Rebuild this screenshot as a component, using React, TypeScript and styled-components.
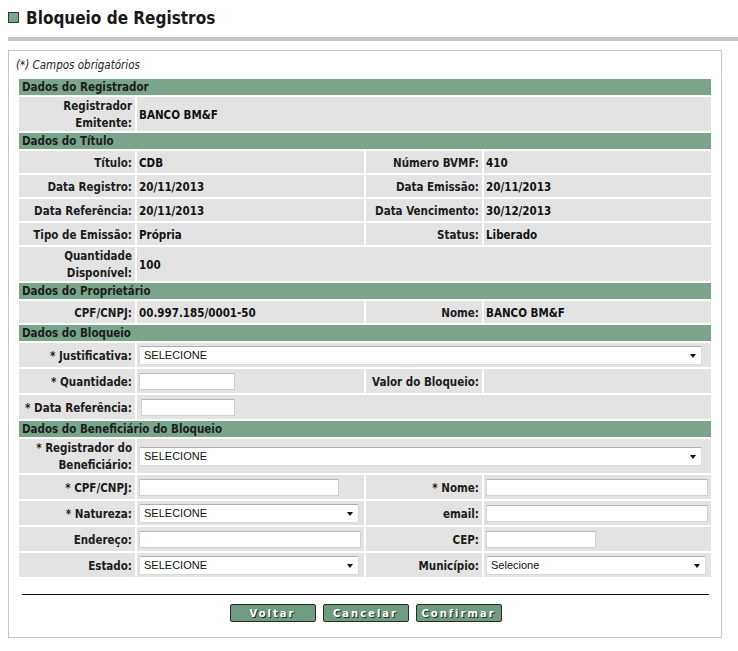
import { FC, ReactNode } from 'react';
import styled, { createGlobalStyle } from 'styled-components';

const GlobalStyle = createGlobalStyle`
  body {
    margin: 0;
    background: #fff;
    font-family: "DejaVu Sans Condensed", "DejaVu Sans", Verdana, sans-serif;
    color: #1a1a1a;
  }
`;

const Page = styled.div`
  width: 738px;
  padding-top: 8px;
`;

const TitleRow = styled.h1`
  display: flex;
  align-items: center;
  gap: 7px;
  margin: 0 0 0 8px;
  height: 19px;
  font-size: 17px;
  font-weight: bold;
  color: #1a1a1a;
`;

const TitleMark = styled.span`
  width: 9px;
  height: 9px;
  background: #7aa58a;
  border: 1px solid #2e3b33;
`;

const Rule = styled.div`
  height: 4px;
  margin: 10px 0 9px 8px;
  background: #c4c4c4;
`;

const Panel = styled.div`
  width: 714px;
  box-sizing: border-box;
  margin-left: 8px;
  padding: 7px 10px 15px;
  border: 1px solid #c4c4c4;
`;

const Note = styled.p`
  margin: 0 0 7px -3px;
  font-size: 11.5px;
  font-style: italic;
  line-height: 14px;
  color: #222;
`;

const Grid = styled.div`
  display: grid;
  grid-template-columns: 116px 227px 116px 1fr;
  gap: 2px;
`;

const SectionHeader = styled.div`
  grid-column: 1 / -1;
  height: 16px;
  padding-left: 3px;
  background: #7aa58a;
  font-size: 11.5px;
  font-weight: bold;
  line-height: 17px;
  color: #1c1c1c;
`;

const Label = styled.div<{ $h: number }>`
  display: flex;
  align-items: center;
  justify-content: flex-end;
  height: ${({ $h }) => $h}px;
  padding-right: 3px;
  background: #e3e3e3;
  font-size: 11.5px;
  font-weight: bold;
  line-height: 17px;
  text-align: right;
  color: #1c1c1c;
`;

const Value = styled.div<{ $span?: number; $pad?: number }>`
  grid-column: span ${({ $span }) => $span ?? 1};
  display: flex;
  align-items: center;
  padding-left: ${({ $pad }) => $pad ?? 2}px;
  background: #e3e3e3;
  font-size: 11.5px;
  font-weight: bold;
  color: #111;
`;

const CellText = styled.span`
  padding-top: 2px;
`;

const TextInput = styled.input<{ $w: number }>`
  width: ${({ $w }) => $w}px;
  height: 17px;
  box-sizing: border-box;
  margin: 0;
  padding: 0 3px;
  border: 1px solid #d0d0d0;
  border-top-color: #b8b8b8;
  background: #fff;
  font: 11px "Liberation Sans", Arial, sans-serif;
`;

const SelectWrap = styled.div<{ $w: number }>`
  position: relative;
  width: ${({ $w }) => $w}px;

  &::after {
    content: '';
    position: absolute;
    right: 6px;
    top: 8px;
    border-left: 3px solid transparent;
    border-right: 3px solid transparent;
    border-top: 4px solid #111;
    pointer-events: none;
  }
`;

const Select = styled.select`
  appearance: none;
  width: 100%;
  height: 19px;
  box-sizing: border-box;
  margin: 0;
  padding: 0 4px;
  border: 1px solid #dadada;
  border-top-color: #b0b0b0;
  border-radius: 2px;
  background: #fff;
  font: 11px "Liberation Sans", Arial, sans-serif;
  color: #111;
`;

const Footer = styled.div`
  margin: 17px 2px 0 3px;
  padding-top: 9px;
  border-top: 1px solid #111;
  display: flex;
  justify-content: center;
  gap: 7px;
`;

const Button = styled.button`
  width: 86px;
  height: 18px;
  padding: 0;
  background: #6f9b7f;
  border: 1px solid #2b2b2b;
  border-radius: 2px;
  color: #fff;
  font-family: "DejaVu Sans", Verdana, sans-serif;
  font-size: 10px;
  font-weight: bold;
  letter-spacing: 2px;
  text-shadow: 1px 1px 0 #1e2a22;
`;

const Field: FC<{ label: ReactNode; h?: number }> = ({ label, h = 22 }) => (
  <Label $h={h}>
    <CellText>{label}</CellText>
  </Label>
);

const Info: FC<{ children: ReactNode; span?: number }> = ({ children, span }) => (
  <Value $span={span}>
    <CellText>{children}</CellText>
  </Value>
);

const Drop: FC<{ w: number; text?: string }> = ({ w, text = 'SELECIONE' }) => (
  <SelectWrap $w={w}>
    <Select defaultValue={text}>
      <option>{text}</option>
    </Select>
  </SelectWrap>
);

const App: FC = () => {
  return (
    <Page>
      <GlobalStyle />
      <TitleRow>
        <TitleMark />
        Bloqueio de Registros
      </TitleRow>
      <Rule />
      <Panel>
        <Note>(*) Campos obrigatórios</Note>
        <Grid>
          <SectionHeader>Dados do Registrador</SectionHeader>
          <Field h={34} label={<>Registrador<br />Emitente:</>} />
          <Info span={3}>BANCO BM&amp;F</Info>

          <SectionHeader>Dados do Título</SectionHeader>
          <Field label="Título:" />
          <Info>CDB</Info>
          <Field label="Número BVMF:" />
          <Info>410</Info>
          <Field label="Data Registro:" />
          <Info>20/11/2013</Info>
          <Field label="Data Emissão:" />
          <Info>20/11/2013</Info>
          <Field label="Data Referência:" />
          <Info>20/11/2013</Info>
          <Field label="Data Vencimento:" />
          <Info>30/12/2013</Info>
          <Field label="Tipo de Emissão:" />
          <Info>Própria</Info>
          <Field label="Status:" />
          <Info>Liberado</Info>
          <Field h={34} label={<>Quantidade<br />Disponível:</>} />
          <Info span={3}>100</Info>

          <SectionHeader>Dados do Proprietário</SectionHeader>
          <Field label="CPF/CNPJ:" />
          <Info>00.997.185/0001-50</Info>
          <Field label="Nome:" />
          <Info>BANCO BM&amp;F</Info>

          <SectionHeader>Dados do Bloqueio</SectionHeader>
          <Field h={24} label="* Justificativa:" />
          <Value $span={3}>
            <Drop w={563} />
          </Value>
          <Field h={24} label="* Quantidade:" />
          <Value>
            <TextInput $w={96} />
          </Value>
          <Field h={24} label="Valor do Bloqueio:" />
          <Value />
          <Field h={24} label="* Data Referência:" />
          <Value $span={3} $pad={4}>
            <TextInput $w={94} />
          </Value>

          <SectionHeader>Dados do Beneficiário do Bloqueio</SectionHeader>
          <Field h={34} label={<>* Registrador do<br />Beneficiário:</>} />
          <Value $span={3}>
            <Drop w={563} />
          </Value>
          <Field h={24} label="* CPF/CNPJ:" />
          <Value>
            <TextInput $w={200} />
          </Value>
          <Field h={24} label="* Nome:" />
          <Value>
            <TextInput $w={222} />
          </Value>
          <Field h={24} label="* Natureza:" />
          <Value>
            <Drop w={220} />
          </Value>
          <Field h={24} label="email:" />
          <Value>
            <TextInput $w={222} />
          </Value>
          <Field h={24} label="Endereço:" />
          <Value>
            <TextInput $w={222} />
          </Value>
          <Field h={24} label="CEP:" />
          <Value>
            <TextInput $w={110} />
          </Value>
          <Field h={24} label="Estado:" />
          <Value>
            <Drop w={220} />
          </Value>
          <Field h={24} label="Município:" />
          <Value>
            <Drop w={220} text="Selecione" />
          </Value>
        </Grid>
        <Footer>
          <Button>Voltar</Button>
          <Button>Cancelar</Button>
          <Button>Confirmar</Button>
        </Footer>
      </Panel>
    </Page>
  );
};

export default App;
